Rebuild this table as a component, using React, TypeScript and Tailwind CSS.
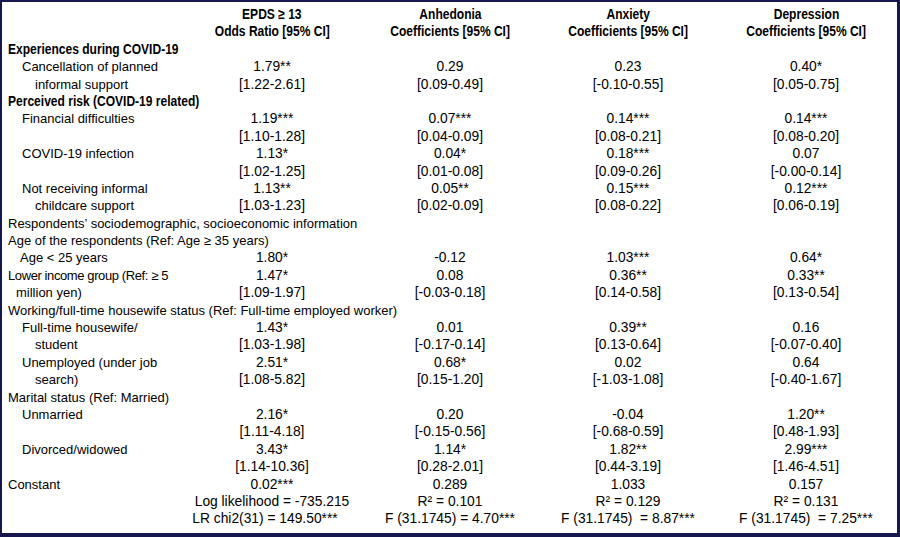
import React from 'react';

type Line = {
    label?: string;
    kind?: 'head' | 'section' | 'span' | 'row';
    indent?: string;
    cells?: string[];
};

const lines: Line[] = [
    { kind: 'head', cells: ['EPDS ≥ 13', 'Anhedonia', 'Anxiety', 'Depression'] },
    { kind: 'head', cells: ['Odds Ratio [95% CI]', 'Coefficients [95% CI]', 'Coefficients [95% CI]', 'Coefficients [95% CI]'] },
    { kind: 'section', label: 'Experiences during COVID-19' },
    { label: 'Cancellation of planned', indent: 'pl-[14px]', cells: ['1.79**', '0.29', '0.23', '0.40*'] },
    { label: 'informal support', indent: 'pl-[27px]', cells: ['[1.22-2.61]', '[0.09-0.49]', '[-0.10-0.55]', '[0.05-0.75]'] },
    { kind: 'section', label: 'Perceived risk (COVID-19 related)' },
    { label: 'Financial difficulties', indent: 'pl-[14px]', cells: ['1.19***', '0.07***', '0.14***', '0.14***'] },
    { cells: ['[1.10-1.28]', '[0.04-0.09]', '[0.08-0.21]', '[0.08-0.20]'] },
    { label: 'COVID-19 infection', indent: 'pl-[14px]', cells: ['1.13*', '0.04*', '0.18***', '0.07'] },
    { cells: ['[1.02-1.25]', '[0.01-0.08]', '[0.09-0.26]', '[-0.00-0.14]'] },
    { label: 'Not receiving informal', indent: 'pl-[14px]', cells: ['1.13**', '0.05**', '0.15***', '0.12***'] },
    { label: 'childcare support', indent: 'pl-[27px]', cells: ['[1.03-1.23]', '[0.02-0.09]', '[0.08-0.22]', '[0.06-0.19]'] },
    { kind: 'span', label: 'Respondents’ sociodemographic, socioeconomic information' },
    { kind: 'span', label: 'Age of the respondents (Ref: Age ≥ 35 years)' },
    { label: 'Age < 25 years', indent: 'pl-[12px]', cells: ['1.80*', '-0.12', '1.03***', '0.64*'] },
    { label: 'Lower income group (Ref: ≥ 5', indent: 'tracking-[-0.4px]', cells: ['1.47*', '0.08', '0.36**', '0.33**'] },
    { label: 'million yen)', indent: 'pl-[8px]', cells: ['[1.09-1.97]', '[-0.03-0.18]', '[0.14-0.58]', '[0.13-0.54]'] },
    { kind: 'span', label: 'Working/full-time housewife status (Ref: Full-time employed worker)' },
    { label: 'Full-time housewife/', indent: 'pl-[14px]', cells: ['1.43*', '0.01', '0.39**', '0.16'] },
    { label: 'student', indent: 'pl-[27px]', cells: ['[1.03-1.98]', '[-0.17-0.14]', '[0.13-0.64]', '[-0.07-0.40]'] },
    { label: 'Unemployed (under job', indent: 'pl-[14px]', cells: ['2.51*', '0.68*', '0.02', '0.64'] },
    { label: 'search)', indent: 'pl-[27px]', cells: ['[1.08-5.82]', '[0.15-1.20]', '[-1.03-1.08]', '[-0.40-1.67]'] },
    { kind: 'span', label: 'Marital status (Ref: Married)' },
    { label: 'Unmarried', indent: 'pl-[14px]', cells: ['2.16*', '0.20', '-0.04', '1.20**'] },
    { cells: ['[1.11-4.18]', '[-0.15-0.56]', '[-0.68-0.59]', '[0.48-1.93]'] },
    { label: 'Divorced/widowed', indent: 'pl-[14px]', cells: ['3.43*', '1.14*', '1.82**', '2.99***'] },
    { cells: ['[1.14-10.36]', '[0.28-2.01]', '[0.44-3.19]', '[1.46-4.51]'] },
    { label: 'Constant', cells: ['0.02***', '0.289', '1.033', '0.157'] },
    { cells: ['Log likelihood = -735.215', 'R² = 0.101', 'R² = 0.129', 'R² = 0.131'] },
    { cells: ['LR chi2(31) = 149.50***', 'F (31.1745) = 4.70***', 'F (31.1745)  = 8.87***', 'F (31.1745)  = 7.25***'] },
];

// condensed bold, squeezed horizontally since no narrow face is installed
const bold = "inline-block font-bold text-[14.5px] scale-x-[0.83]";

export default function App() {
    return (
        <div className="w-[900px] h-[537px] bg-white border-t-2 border-l-2 border-r-[3px] border-b-4 border-[#17174f] overflow-hidden">
            <div className="pt-[4px] pl-[6px] pr-[2px] text-black font-['Liberation_Sans',Arial,sans-serif] text-[13px]">
                <div className="grid grid-cols-[175px_repeat(4,178px)] auto-rows-[17.4px] leading-[17.4px] whitespace-nowrap">
                    {lines.map((line, i) => {
                        if (line.kind === 'section') {
                            return (
                                <div key={i} className="col-span-5">
                                    <span className={`${bold} origin-left`}>{line.label}</span>
                                </div>
                            );
                        }
                        if (line.kind === 'span') {
                            return (
                                <div key={i} className="col-span-5">{line.label}</div>
                            );
                        }
                        if (line.kind === 'head') {
                            return (
                                <React.Fragment key={i}>
                                    <div />
                                    {line.cells!.map((c, j) => (
                                        <div key={j} className="text-center">
                                            <span className={`${bold} origin-center`}>{c}</span>
                                        </div>
                                    ))}
                                </React.Fragment>
                            );
                        }
                        return (
                            <React.Fragment key={i}>
                                <div className={line.indent || ''}>{line.label || ''}</div>
                                {line.cells!.map((c, j) => (
                                    <div key={j} className={`text-center text-[13.8px] whitespace-pre ${i === lines.length - 1 && j === 0 ? 'pr-[14px]' : ''}`}>{c}</div>
                                ))}
                            </React.Fragment>
                        );
                    })}
                </div>
            </div>
        </div>
    );
}
